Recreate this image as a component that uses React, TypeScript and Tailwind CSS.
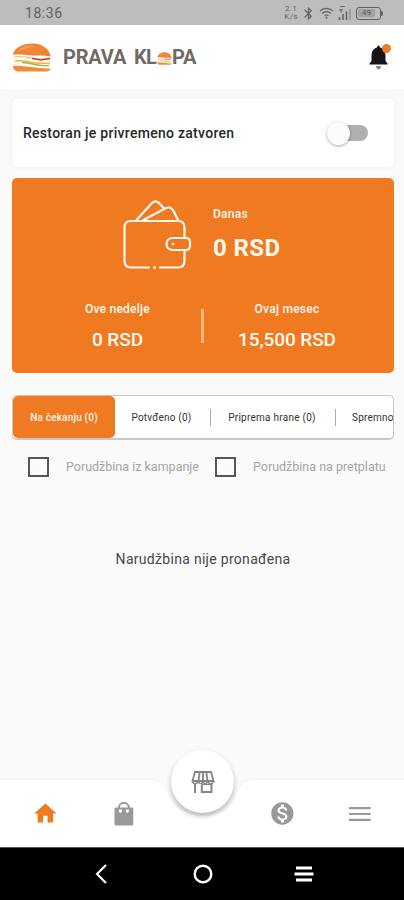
import React from "react";
import { MdBluetooth, MdHome, MdMonetizationOn } from "react-icons/md";

const tabs = [
  { label: "Potvđeno (0)", box: "w-[95px] pr-[2px]", text: "tracking-[0.2px]" },
  { label: "Priprema hrane (0)", box: "w-[124px] pr-[2px]", text: "tracking-[0.25px]" },
  { label: "Spremno za predaju (0)", box: "w-[160px] justify-start pl-[16px]", text: "tracking-[0.2px]" },
];

const filters = [
  { label: "Porudžbina iz kampanje", box: "w-[188px]" },
  { label: "Porudžbina na pretplatu", box: "w-[180px]" },
];

function Burger({ className }: { className: string }) {
  return (
    <svg viewBox="0 0 40 29" preserveAspectRatio="none" className={className}>
      <path d="M1 12C2 5 10 .5 20 .5S37 5 39 14C30 11 15 14 1 12Z" fill="#ee8535" />
      <path d="M6 8C10 3 17 2 22 2.500C16 5 11 7 6 8Z" fill="#f5a35c" />
      <path d="M1 12C14 10 27 16 39 13L39 24C25 26 14 20 1 22Z" fill="#fffaf2" />
      <path d="M2 14C13 12 25 18 38 15" fill="none" stroke="#f2b48b" strokeWidth="1" />
      <path d="M20 15.500L29 17L38 15.500" fill="none" stroke="#c8402c" strokeWidth="1.400" />
      <path d="M3 18C15 16 18 22 38 20" fill="none" stroke="#f1b63c" strokeWidth="1.500" />
      <path d="M10 19.500C20 19 23 24 37 22.500" fill="none" stroke="#9cb84a" strokeWidth="1.300" />
      <path d="M1 23C12 22 23 26 39 25.500C38 28 36 28.500 33 28.500H7C3 28.500 1 26 1 23Z" fill="#ef8b3d" />
    </svg>
  );
}

function StatusBar() {
  return (
    <div className="h-[25px] bg-[#bdbdbd] flex items-center justify-between pl-[25px] pr-[21px] text-[#616161]">
      <span className="text-[14px] leading-none tracking-[0.55px] pt-px">18:36</span>
      <div className="flex items-center pt-px">
        <div className="w-[16px] text-[8px] leading-[8px] text-center tracking-[0.3px]">
          <div>2.1</div>
          <div>K/s</div>
        </div>
        <MdBluetooth className="w-[15px] h-[15px] ml-[2px]" />
        <svg viewBox="0 0 16 14" className="w-[15px] h-[14px] ml-[3px]" fill="none" stroke="currentColor" strokeWidth="1.300">
          <path d="M1 5C5 1 11 1 15 5M3.500 7.500C6 5 10 5 12.500 7.500M6 10C7 9 9 9 10 10" />
          <circle cx="8" cy="12" r="1" fill="currentColor" stroke="none" />
        </svg>
        <svg viewBox="0 0 14 16" className="w-[14px] h-[16px] ml-[4px]" fill="none" stroke="currentColor">
          <path d="M2 1.500H7M1 5H5M3 4V8" strokeWidth="0.900" />
          <path d="M1.500 12V15M5 9V15M8.500 6.500V15" strokeWidth="1.500" />
          <path d="M12 4V15" strokeWidth="1" opacity="0.700" />
        </svg>
        <div className="ml-[4px] w-[25px] h-[13px] border-[1.500px] border-[#616161] rounded-[3px] flex items-center pl-px">
          <span className="bg-[#a2a2a2] rounded-[1px] h-[8px] w-[17px] text-[8px] leading-[8px] text-center text-[#555]">49</span>
        </div>
        <div className="w-[2px] h-[5px] bg-[#616161] rounded-r-sm"></div>
      </div>
    </div>
  );
}

function Header() {
  return (
    <header className="h-[64px] bg-white flex items-center justify-between pl-[12px] pr-[13px]">
      <div className="flex items-center">
        <Burger className="w-[40px] h-[29px]" />
        <div className="flex items-center ml-[11px] font-['Roboto',sans-serif] font-bold text-[20px] leading-none text-[#706a65] whitespace-nowrap">
          <span className="w-[71px] tracking-[-0.2px]">PRAVA</span>
          <span className="w-[23px] tracking-[-0.8px]">KL</span>
          <Burger className="w-[15px] h-[13px] mt-[2px]" />
          <span className="tracking-[-0.3px]">PA</span>
        </div>
      </div>
      <svg viewBox="0 0 24 28" className="w-[24px] h-[28px]">
        <path d="M10 4.500C10 1.800 13 1.800 13 4.500C17 5.500 18.500 9 18.500 13V18L20.500 20.500V21.500H2.500V20.500L4.500 18V13C4.500 9 6 5.500 10 4.500Z" fill="#161616" />
        <path d="M9 23H14C14 25.500 12.500 26.500 11.500 26.500S9 25.500 9 23Z" fill="#8a8a8a" />
        <circle cx="19.500" cy="5.500" r="4.500" fill="#ee7a22" />
      </svg>
    </header>
  );
}

function Wallet() {
  return (
    <svg viewBox="0 0 72 74" className="w-[72px] h-[74px]" fill="none" stroke="#fff8ee" strokeWidth="2.200" strokeLinecap="round" strokeLinejoin="round">
      <path d="M27 70.500H9C5 70.500 2.500 68 2.500 64V30.500C2.500 26.500 5 24 9 24H56C60 24 62.500 26.500 62.500 30.500V40.500" />
      <path d="M62.500 54.500V64C62.500 68 60 70.500 56 70.500H38" />
      <path d="M32.500 70.500H32.700" strokeWidth="2.600" />
      <path d="M51 41H64C66.500 41 68 42.500 68 45V49C68 51.500 66.500 53 64 53H51C47 53 44.500 50.500 44.500 47S47 41 51 41Z" />
      <path d="M51 47H51.200" strokeWidth="2.600" />
      <path d="M14.500 23L30 6C32.500 3.500 35 4 37.500 6.500L42 11.500" />
      <path d="M21.500 23L43 11.500C47 9.500 50 10.500 51.500 14L56 23" />
    </svg>
  );
}

function EarningsCard() {
  return (
    <section className="mt-[11px] h-[195px] rounded-[5px] bg-[#ef7a22] text-[#fff8ee]">
      <div className="flex pl-[110px] pt-[19px] h-[118px]">
        <Wallet />
        <div className="ml-[19px] pt-[10px]">
          <div className="text-[12px] leading-[15px] font-medium tracking-[0.25px]">Danas</div>
          <div className="mt-[10px] text-[24px] leading-[32px] font-bold tracking-[0.4px]">0 RSD</div>
        </div>
      </div>
      <div className="flex text-center">
        <div className="w-[189px] pl-[22px]">
          <div className="text-[12px] leading-[27px] font-medium tracking-[0.25px]">Ove nedelje</div>
          <div className="text-[19px] leading-[33px] font-medium tracking-[-0.1px]">0 RSD</div>
        </div>
        <div className="w-[3px] h-[34px] mt-[13px] bg-[#f7b77e]"></div>
        <div className="w-[190px] pr-[24px]">
          <div className="text-[12px] leading-[27px] font-medium tracking-[0.25px]">Ovaj mesec</div>
          <div className="text-[19px] leading-[33px] font-medium tracking-[-0.1px]">15,500 RSD</div>
        </div>
      </div>
    </section>
  );
}

function Orders() {
  return (
    <section>
      <div className="mt-[22px] h-[45px] border border-[#c8c8c8] border-b-2 rounded-[5px] bg-white flex items-stretch overflow-hidden text-[10px] text-[#333] whitespace-nowrap">
        <div className="w-[102px] shrink-0 rounded-[5px] bg-[#ef7a22] text-[#fff8ee] font-medium flex items-center justify-center tracking-[0.2px]">
          Na čekanju (0)
        </div>
        {tabs.map((tab, idx) => (
          <React.Fragment key={idx}>
            {idx > 0 && <div className="w-px h-[17px] shrink-0 self-center bg-[#aaa]"></div>}
            <div className={`${tab.box} shrink-0 flex items-center justify-center`}>
              <span className={tab.text}>{tab.label}</span>
            </div>
          </React.Fragment>
        ))}
      </div>
      <div className="flex pl-[16px] pt-[17px] text-[12.5px] leading-[20px] text-[#a5a5a5] whitespace-nowrap">
        {filters.map((filter) => (
          <label key={filter.label} className={`${filter.box} flex items-center`}>
            <span className="w-[21px] h-[20px] border-2 border-[#555] mr-[17px] shrink-0"></span>
            <span>{filter.label}</span>
          </label>
        ))}
      </div>
      <p className="mt-[72px] text-center text-[14px] leading-[20px] tracking-[0.3px] text-[#484848]">Narudžbina nije pronađena</p>
    </section>
  );
}

function BottomNav() {
  return (
    <nav className="relative h-[67px] flex items-center text-[#999]">
      <svg viewBox="0 0 404 67" className="absolute inset-0 w-[404px] h-[67px] drop-shadow-[0_-1px_1px_rgba(0,0,0,0.03)]">
        <path d="M0 0H150C160 0 164 4 167 12C173 27 185 36 202.500 36S232 27 238 12C241 4 245 0 255 0H404V67H0Z" fill="#fff" />
      </svg>
      <div className="relative w-full flex items-center pl-[32px] pr-[33px] justify-between">
        <MdHome className="w-[27px] h-[27px] text-[#ef7a22]" />
        <svg viewBox="0 0 20 24" className="w-[20px] h-[24px] ml-[55px] mr-[135px]">
          <path d="M5 6C5 -1 15 -1 15 6" fill="none" stroke="#999" strokeWidth="2" />
          <path fillRule="evenodd" d="M2 5.500H18Q19.500 5.500 19.500 7V22Q19.500 23.500 18 23.500H2Q.5 23.500 .5 22V7Q.5 5.500 2 5.500ZM5 7.500V9.500Q6.500 12.500 8 9.500V7.500ZM12 7.500V9.500Q13.500 12.500 15 9.500V7.500Z" fill="#999" />
        </svg>
        <MdMonetizationOn className="w-[27px] h-[27px]" />
        <svg viewBox="0 0 22 16" className="w-[22px] h-[16px] ml-[54px]" stroke="#999" strokeWidth="2.200">
          <path d="M0 2H22M0 8H22M0 14H22" />
        </svg>
      </div>
      <div className="absolute left-[171px] top-[-30px] w-[63px] h-[63px] rounded-full bg-white shadow-[0_3px_5px_rgba(0,0,0,0.28)] flex items-center justify-center">
        <svg viewBox="0 0 24 24" className="w-[24px] h-[24px]" fill="none" stroke="#858585" strokeWidth="1.800">
          <path d="M4 2H20L22.500 11H1.500ZM8.700 2L7.500 11M12 2V11M15.300 2L16.500 11" />
          <path d="M1.500 11C2 14.500 6.500 14.500 7.500 11C8 14.500 11.500 14.500 12 11C12.500 14.500 16 14.500 16.500 11C17.500 14.500 22 14.500 22.500 11" strokeWidth="1.400" />
          <path d="M4 14V23M10.800 14.500V22H20.500V14" strokeWidth="2" />
          <path d="M11 14.500H20" strokeWidth="1.200" />
        </svg>
      </div>
    </nav>
  );
}

function SystemNav() {
  return (
    <div className="h-[53px] bg-black border-t border-[#555] flex items-center justify-between pl-[95px] pr-[90px]">
      <svg viewBox="0 0 12 20" className="w-[12px] h-[20px]" fill="none" stroke="#fff" strokeWidth="2.200">
        <path d="M11 1L2 10L11 19" />
      </svg>
      <svg viewBox="0 0 20 20" className="w-[20px] h-[20px] ml-[4px]" fill="none" stroke="#fff" strokeWidth="2.400">
        <circle cx="10" cy="10" r="8.300" />
      </svg>
      <svg viewBox="0 0 20 18" className="w-[20px] h-[18px]" stroke="#fff" strokeWidth="2.800">
        <path d="M2 3H18M.500 9H19.500M2 15H18" />
      </svg>
    </div>
  );
}

export default function App() {
  return (
    <div className="w-[404px] h-[900px] overflow-hidden flex flex-col bg-[#fafafa] font-['Roboto',sans-serif]">
      <StatusBar />
      <Header />
      <main className="flex-1 px-[12px] pr-[10px] pt-[10px]">
        <div className="h-[68px] rounded-[5px] bg-white shadow-[0_0_6px_rgba(0,0,0,0.05)] flex items-center justify-between pl-[11px] pr-[26px]">
          <span className="text-[14px] font-medium tracking-[0.28px] text-[#282828]">Restoran je privremeno zatvoren</span>
          <div className="w-[41px] flex items-center">
            <div className="relative w-[23px] h-[23px] rounded-full bg-[#fcfcfc] shadow-[0_1px_3px_rgba(0,0,0,0.35)]"></div>
            <div className="-ml-[4px] w-[22px] h-[16px] rounded-r-full bg-[#b0b0b0]"></div>
          </div>
        </div>
        <EarningsCard />
        <Orders />
      </main>
      <BottomNav />
      <SystemNav />
    </div>
  );
}
